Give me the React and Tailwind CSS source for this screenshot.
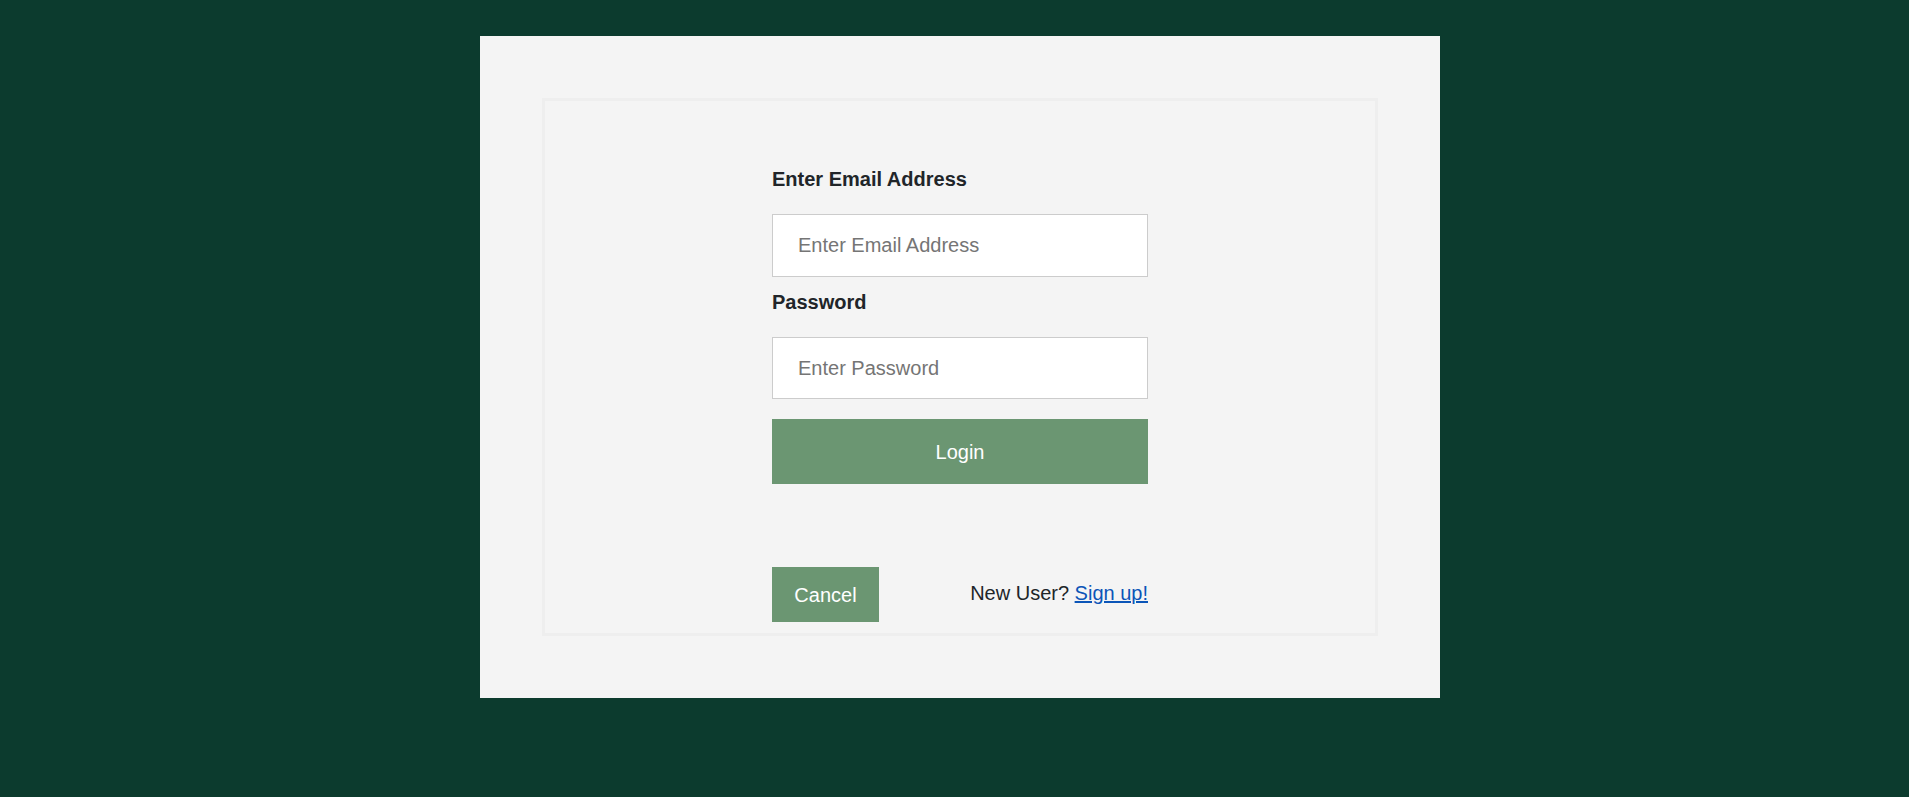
export default function App() {
  return (
    <div className="min-h-screen w-full bg-[#0c3b2e] pt-[36px] font-['Liberation_Sans',Arial,sans-serif]">
      <div className="ml-[480px] h-[662px] w-[960px] bg-[#f4f4f4] p-[62px]">
        <div className="h-full border-[3px] border-[#eeeeee] pt-[63px]">
          <form className="mx-auto flex w-[376px] flex-col" onSubmit={(e) => e.preventDefault()}>
            <label className="mb-[20px] block text-[20px] font-bold leading-[30px] text-[#212529]">
              Enter Email Address
            </label>
            <input
              type="email"
              placeholder="Enter Email Address"
              className="h-[63px] w-full border border-[#cccccc] bg-white px-[25px] text-[20px] text-[#212529] outline-none placeholder:text-[#757575]"
            />
            <label className="mb-[20px] mt-[10px] block text-[20px] font-bold leading-[30px] text-[#212529]">
              Password
            </label>
            <input
              type="password"
              placeholder="Enter Password"
              className="h-[62px] w-full border border-[#cccccc] bg-white px-[25px] text-[20px] text-[#212529] outline-none placeholder:text-[#757575]"
            />
            <button
              type="submit"
              className="mt-[20px] h-[65px] w-full bg-[#6b9672] text-[20px] text-white"
            >
              Login
            </button>
            <div className="mt-[83px] flex items-center justify-between">
              <button type="button" className="h-[55px] w-[107px] bg-[#6b9672] text-[20px] text-white">
                Cancel
              </button>
              <p className="mb-[4px] text-[20px] text-[#212529]">
                New User?{" "}
                <a href="#" className="text-[#0b55b8] underline">
                  Sign up!
                </a>
              </p>
            </div>
          </form>
        </div>
      </div>
    </div>
  );
}
